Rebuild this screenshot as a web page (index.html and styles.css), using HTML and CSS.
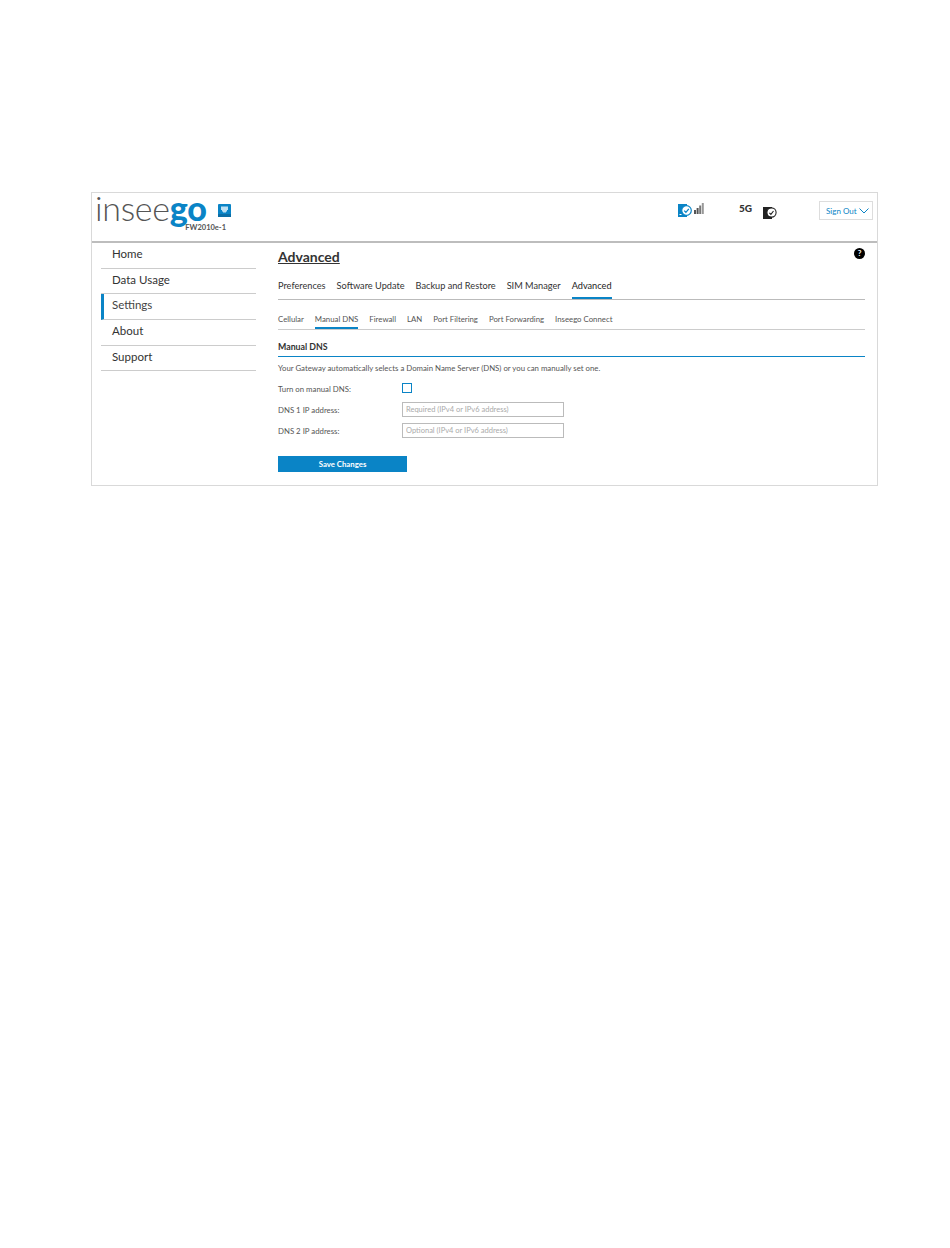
FILE: index.html
```html
<!DOCTYPE html>
<html>
<head>
  <title>Manual DNS</title>
  <link rel="stylesheet" href="styles.css">
</head>
<body>
  <div class="frame">

    <!-- Header -->
    <div class="header">
      <div class="brand">
        <div class="logo-row">
          <div class="logo">insee<b>go</b></div>
          <svg class="lan-icon" width="13" height="13" viewBox="0 0 13 13">
            <rect width="13" height="13" rx="1" fill="#0a84c6"/>
            <path d="M3 2.5h7v3.5h-1v1.5h-1v1h-3v-1h-1v-1.5h-1z" fill="#bfe0f2"/>
            <rect y="10" width="13" height="3" fill="#0b6ea6"/>
          </svg>
        </div>
        <div class="model">FW2010e-1</div>
      </div>
      <div class="status">
        <svg class="wifi-icon" width="14" height="13" viewBox="0 0 14 13">
          <path d="M0 0h9v13h-9z" fill="#0a84c6"/>
          <circle cx="8.5" cy="6.5" r="4.8" fill="#fff" stroke="#0a84c6" stroke-width="1.2"/>
          <path d="M6.2 6.6l1.7 1.7 2.9-3.4" fill="none" stroke="#0a84c6" stroke-width="1.3"/>
          <path d="M1.5 10.5h2" stroke="#fff" stroke-width="1"/>
        </svg>
        <svg class="signal-icon" width="10" height="11" viewBox="0 0 10 11">
          <rect x="0" y="7" width="2" height="4" fill="#555"/>
          <rect x="2.6" y="5" width="2" height="6" fill="#555"/>
          <rect x="5.2" y="2.5" width="2" height="8.5" fill="#777"/>
          <rect x="7.8" y="0" width="2" height="11" fill="#999"/>
        </svg>
        <span class="net">5G</span>
        <svg class="sim-icon" width="14" height="13" viewBox="0 0 14 13">
          <path d="M0 1h9v12h-9z" fill="#222"/>
          <circle cx="8.5" cy="6.5" r="4.6" fill="#fff" stroke="#222" stroke-width="1.1"/>
          <path d="M6.4 6.8l1.5 1.5 2.6-3.3" fill="none" stroke="#222" stroke-width="1.1"/>
        </svg>
        <button class="sign-out">Sign Out
          <svg width="10" height="6" viewBox="0 0 10 6"><path d="M.5.5l4.5 4.5 4.5-4.5" fill="none" stroke="#0a84c6" stroke-width="1"/></svg>
        </button>
      </div>
    </div>

    <div class="body">
      <!-- Left menu -->
      <div class="sidebar">
        <div class="nav-item">Home</div>
        <div class="nav-item">Data Usage</div>
        <div class="nav-item active">Settings</div>
        <div class="nav-item">About</div>
        <div class="nav-item">Support</div>
      </div>

      <!-- Main -->
      <div class="main">
        <div class="title-row">
          <h1>Advanced</h1>
          <span class="help">?</span>
        </div>

        <div class="tabs">
          <span class="tab">Preferences</span>
          <span class="tab">Software Update</span>
          <span class="tab">Backup and Restore</span>
          <span class="tab">SIM Manager</span>
          <span class="tab current">Advanced</span>
        </div>

        <div class="tabs sub">
          <span class="tab">Cellular</span>
          <span class="tab current">Manual DNS</span>
          <span class="tab">Firewall</span>
          <span class="tab">LAN</span>
          <span class="tab">Port Filtering</span>
          <span class="tab">Port Forwarding</span>
          <span class="tab">Inseego Connect</span>
        </div>

        <h2>Manual DNS</h2>
        <p class="intro">Your Gateway automatically selects a Domain Name Server (DNS) or you can manually set one.</p>

        <div class="form-row check-row">
          <label>Turn on manual DNS:</label>
          <span class="checkbox"></span>
        </div>
        <div class="form-row">
          <label>DNS 1 IP address:</label>
          <input type="text" placeholder="Required (IPv4 or IPv6 address)">
        </div>
        <div class="form-row">
          <label>DNS 2 IP address:</label>
          <input type="text" placeholder="Optional (IPv4 or IPv6 address)">
        </div>

        <button class="save">Save Changes</button>
      </div>
    </div>
  </div>
</body>
</html>
```

FILE: styles.css
```css
body {
  font-family: 'Lato', sans-serif;
  margin: 0;
  background-color: #fff;
  color: #333;
}

.frame {
  width: 785px;
  height: 292px;
  margin: 192px 0 0 91px;
  border: 1px solid #d9d9d9;
}

.header {
  display: flex;
  height: 48px;
  border-bottom: 2px solid #bdbdbd;
}

.brand {
  width: 139px;
  padding-left: 3px;
  flex-shrink: 0;
}

.logo-row {
  display: flex;
  align-items: flex-start;
  height: 31px;
}

.logo {
  width: 123px;
  font-size: 34px;
  line-height: 30px;
  font-weight: 300;
  letter-spacing: -0.3px;
  color: #555;
}

.logo b {
  color: #0a84c6;
  font-weight: 900;
}

.lan-icon {
  margin-top: 11px;
}

.model {
  font-size: 7.5px;
  line-height: 10px;
  margin-top: -1px;
  padding-right: 8px;
  text-align: right;
  font-weight: 700;
  color: #555;
}

.status {
  flex: 1;
  display: flex;
  align-items: flex-start;
  justify-content: flex-end;
  padding-right: 4px;
}

.wifi-icon {
  margin-top: 11px;
}

.signal-icon {
  margin: 10px 0 0 2px;
}

.net {
  font-size: 10px;
  font-weight: 900;
  color: #333;
  margin: 8px 0 0 35px;
  line-height: 14px;
}

.sim-icon {
  margin: 13px 0 0 11px;
}

.sign-out {
  display: flex;
  align-items: center;
  justify-content: space-between;
  width: 54px;
  height: 19px;
  margin: 8px 0 0 42px;
  padding: 0 3px 0 6px;
  background: #fff;
  border: 1px solid #ddd;
  color: #0a84c6;
  font-family: inherit;
  font-size: 8px;
}

.body {
  display: flex;
}

.sidebar {
  width: 155px;
  margin-left: 9px;
  flex-shrink: 0;
}

.nav-item {
  height: 24.7px;
  line-height: 22px;
  padding-left: 11px;
  font-size: 11.5px;
  color: #333;
  border-bottom: 1px solid #ccc;
}

.nav-item.active {
  border-left: 3px solid #0a84c6;
  padding-left: 8px;
  color: #444;
}

.main {
  flex: 1;
  margin: 0 12px 0 22px;
}

.title-row {
  display: flex;
  justify-content: space-between;
  align-items: flex-start;
  height: 33px;
}

h1 {
  margin: 4px 0 0;
  font-size: 14px;
  line-height: 20px;
  font-weight: 700;
  text-decoration: underline;
  color: #333;
}

.help {
  width: 11px;
  height: 11px;
  margin-top: 5px;
  border-radius: 50%;
  background: #000;
  color: #fff;
  font-size: 8px;
  font-weight: 700;
  line-height: 11px;
  text-align: center;
}

.tabs {
  display: flex;
  gap: 11px;
  height: 23px;
  border-bottom: 1px solid #bbb;
}

.tab {
  font-size: 9.2px;
  line-height: 19px;
  height: 21px;
  color: #333;
}

.tab.current {
  color: #222;
  border-bottom: 2px solid #0a84c6;
}

.tabs.sub {
  height: 19px;
  margin-top: 10px;
  border-bottom-color: #ccc;
}

.tabs.sub .tab {
  font-size: 7.8px;
  line-height: 18px;
  height: 17px;
  color: #555;
}

h2 {
  margin: 11px 0 0;
  padding-bottom: 3px;
  font-size: 8.8px;
  line-height: 12px;
  font-weight: 700;
  color: #333;
  border-bottom: 1px solid #0a84c6;
}

.intro {
  margin: 6px 0 0;
  font-size: 7.8px;
  line-height: 11px;
  color: #555;
}

.form-row {
  display: flex;
  align-items: center;
  height: 21px;
  font-size: 7.8px;
  color: #555;
}

.form-row label {
  width: 124px;
}

.check-row {
  margin-top: 5px;
  height: 20px;
}

.checkbox {
  width: 8px;
  height: 8px;
  margin-bottom: 3px;
  border: 1px solid #0a84c6;
}

.form-row input {
  box-sizing: border-box;
  width: 162px;
  height: 15px;
  padding: 1px 3px;
  border: 1px solid #bbb;
  font-family: inherit;
  font-size: 7.5px;
}

.form-row input::placeholder {
  color: #aaa;
}

.save {
  display: block;
  width: 129px;
  height: 16px;
  margin-top: 15px;
  padding: 0;
  border: none;
  background: #0a84c6;
  color: #fff;
  font-family: inherit;
  font-size: 7.8px;
  font-weight: 700;
}
```
